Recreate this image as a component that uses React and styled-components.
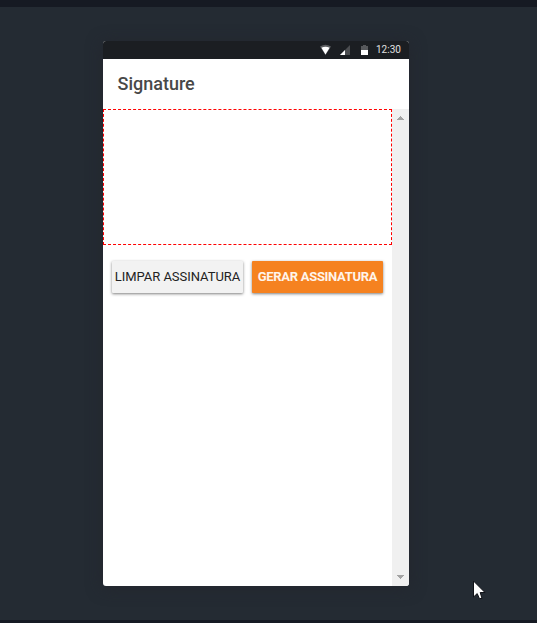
import React from "react";
import styled, { createGlobalStyle } from "styled-components";

const GlobalStyle = createGlobalStyle`
  * { box-sizing: border-box; }
  body { margin: 0; overflow: hidden; font-family: Roboto, "Liberation Sans", sans-serif; }
`;

const Stage = styled.main`
  position: relative;
  display: flex;
  justify-content: flex-start;
  width: 537px;
  height: 623px;
  padding: 34px 0 0 103px;
  background: #242b33;
  border-top: 7px solid #161a23;
  border-bottom: 3px solid #161a23;
`;

const Phone = styled.section`
  display: flex;
  flex-direction: column;
  width: 306px;
  height: 545px;
  border-radius: 3px;
  overflow: hidden;
  background: #fff;
  box-shadow: 0 2px 16px rgba(36, 35, 43, 0.7);
`;

const StatusBar = styled.div`
  display: flex;
  flex: none;
  align-items: center;
  justify-content: flex-end;
  height: 18px;
  padding-right: 8px;
  background: #1b1e22;
`;

const StatusIcons = styled.svg`
  display: block;
  width: 56px;
  height: 18px;
`;

const Clock = styled.time`
  width: 25px;
  color: #e0e0e0;
  font-size: 10px;
  line-height: 18px;
  white-space: nowrap;
`;

const Header = styled.header`
  display: flex;
  flex: none;
  align-items: center;
  height: 50px;
  padding-left: 14.5px;
`;

const Title = styled.h1`
  margin: 0;
  color: #484848;
  font-size: 18px;
  font-weight: 500;
  line-height: 24px;
`;

const Body = styled.div`
  display: flex;
  flex: 1;
`;

const Content = styled.div`
  width: 289px;
`;

const SignaturePad = styled.div`
  height: 136px;
  border: 1px dashed #f00;
`;

const Actions = styled.div`
  display: flex;
  gap: 9px;
  padding: 16px 9px;
`;

const Button = styled.button`
  width: 131px;
  height: 32px;
  padding: 0;
  border: 0;
  border-radius: 1px;
  background: ${({ $primary }) => ($primary ? "#f58220" : "#f2f2f2")};
  color: ${({ $primary }) => ($primary ? "#fff4ea" : "#222")};
  box-shadow: 0 1px 3px rgba(0, 0, 0, 0.5);
  font-family: inherit;
  font-size: 13px;
  font-weight: ${({ $primary }) => ($primary ? 700 : 400)};
  letter-spacing: ${({ $primary }) => ($primary ? "-0.3px" : "-0.03px")};
  line-height: 32px;
  white-space: nowrap;
`;

const ScrollTrack = styled.div`
  display: flex;
  flex-direction: column;
  align-items: center;
  justify-content: space-between;
  width: 17px;
  padding: 7px 0 6px;
  background: #f0f0f0;
`;

const ScrollArrow = styled.svg`
  display: block;
  width: 9px;
  height: 5px;
`;

const Pointer = styled.svg`
  position: absolute;
  left: 473px;
  top: 573px;
  width: 13px;
  height: 20px;
`;

export default function App() {
  return (
    <>
      <GlobalStyle />
      <Stage>
        <Phone>
          <StatusBar>
            <StatusIcons viewBox="0 0 56 18">
              <path d="M0 5.5Q5.5 1.8 11 5.5L5.5 14Z" fill="#5b5d60" />
              <path d="M1.4 6.8Q5.5 4.6 9.6 6.8L5.5 13.5Z" fill="#fff" />
              <path d="M20 14L30 4V14Z" fill="#4b4d50" />
              <path d="M20 14L25 9V14Z" fill="#fff" />
              <path d="M41 5H43V4H46V5H48V9H41Z" fill="#56585b" />
              <path d="M41 9H48V14H41Z" fill="#fff" />
            </StatusIcons>
            <Clock>12:30</Clock>
          </StatusBar>
          <Header>
            <Title>Signature</Title>
          </Header>
          <Body>
            <Content>
              <SignaturePad />
              <Actions>
                <Button>LIMPAR ASSINATURA</Button>
                <Button $primary>GERAR ASSINATURA</Button>
              </Actions>
            </Content>
            <ScrollTrack>
              <ScrollArrow viewBox="0 0 9 5" shapeRendering="crispEdges">
                <path d="M4 0H5V1H6V2H7V3H8V4H1V3H2V2H3V1H4Z" fill="#a3a3a3" />
              </ScrollArrow>
              <ScrollArrow viewBox="0 0 9 5" shapeRendering="crispEdges">
                <path d="M1 0H8V1H7V2H6V3H5V4H4V3H3V2H2V1H1Z" fill="#a3a3a3" />
              </ScrollArrow>
            </ScrollTrack>
          </Body>
        </Phone>
        <Pointer viewBox="0 0 13 20">
          <path
            d="M.5 1V17L4.2 13.6L6.4 18.5H9L7.2 12.5H12Z"
            fill="#fff"
            stroke="#111318"
            strokeWidth="1"
          />
        </Pointer>
      </Stage>
    </>
  );
}
